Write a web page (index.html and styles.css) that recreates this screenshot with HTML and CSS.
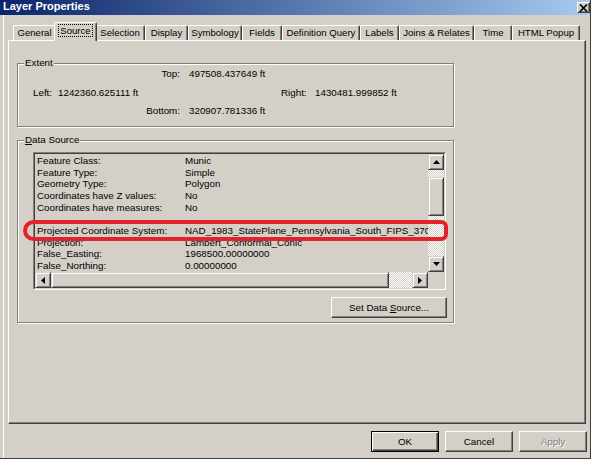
FILE: index.html
```html
<!DOCTYPE html>
<html>
<head>
<meta charset="utf-8">
<link rel="stylesheet" href="styles.css">
</head>
<body>
<div class="window">
  <div class="titlebar">
    <span class="title">Layer Properties</span>
    <span class="close"><svg width="9" height="8" viewBox="0 0 9 8"><path d="M1 0.5 L8 7.5 M8 0.5 L1 7.5" stroke="#000" stroke-width="1.6" fill="none"/></svg></span>
  </div>
  <div class="client">
    <div class="tabs">
      <div class="tab w-general">General</div>
      <div class="tab sel w-source"><span class="focus">Source</span></div>
      <div class="tab w-selection">Selection</div>
      <div class="tab w-display">Display</div>
      <div class="tab w-symbology">Symbology</div>
      <div class="tab w-fields">Fields</div>
      <div class="tab w-defq">Definition Query</div>
      <div class="tab w-labels">Labels</div>
      <div class="tab w-joins">Joins &amp; Relates</div>
      <div class="tab w-time">Time</div>
      <div class="tab w-html">HTML Popup</div>
    </div>
    <div class="panel">
      <div class="group extent">
        <div class="gtitle">Extent</div>
        <div class="erow r1"><span class="ecell-r">Top:</span><span class="evalue">497508.437649 ft</span></div>
        <div class="erow r2"><span class="ecell-left"><span class="lleft">Left:</span>1242360.625111 ft</span><span class="lright">Right:</span><span>1430481.999852 ft</span></div>
        <div class="erow r3"><span class="ecell-r">Bottom:</span><span class="evalue">320907.781336 ft</span></div>
      </div>
      <div class="group ds">
        <div class="gtitle"><u>D</u>ata Source</div>
        <div class="list">
          <div class="list-inner">
            <div class="rows">
              <div class="row"><span class="k">Feature Class:</span><span class="v">Munic</span></div>
              <div class="row"><span class="k">Feature Type:</span><span class="v">Simple</span></div>
              <div class="row"><span class="k">Geometry Type:</span><span class="v">Polygon</span></div>
              <div class="row"><span class="k">Coordinates have Z values:</span><span class="v">No</span></div>
              <div class="row"><span class="k">Coordinates have measures:</span><span class="v">No</span></div>
              <div class="row"><span class="k">&nbsp;</span><span class="v"></span></div>
              <div class="row"><span class="k">Projected Coordinate System:</span><span class="v">NAD_1983_StatePlane_Pennsylvania_South_FIPS_3702</span></div>
              <div class="row"><span class="k">Projection:</span><span class="v">Lambert_Conformal_Conic</span></div>
              <div class="row"><span class="k">False_Easting:</span><span class="v">1968500.00000000</span></div>
              <div class="row"><span class="k">False_Northing:</span><span class="v">0.00000000</span></div>
            </div>
            <div class="vsb">
              <div class="sbtn"><svg width="7" height="4" viewBox="0 0 7 4"><polygon points="3.5,0 7,4 0,4" fill="#000"/></svg></div>
              <div class="track vgap"></div>
              <div class="thumb vthumb"></div>
              <div class="track vfill"></div>
              <div class="sbtn"><svg width="7" height="4" viewBox="0 0 7 4"><polygon points="0,0 7,0 3.5,4" fill="#000"/></svg></div>
            </div>
            <div class="hsb">
              <div class="sbtn"><svg width="4" height="7" viewBox="0 0 4 7"><polygon points="4,0 4,7 0,3.5" fill="#000"/></svg></div>
              <div class="thumb hthumb"></div>
              <div class="track hfill"></div>
              <div class="sbtn"><svg width="4" height="7" viewBox="0 0 4 7"><polygon points="0,0 4,3.5 0,7" fill="#000"/></svg></div>
            </div>
            <div class="corner"></div>
          </div>
        </div>
        <div class="btn setds"><span>Set Data <u>S</u>ource...</span></div>
        <div class="highlight"></div>
      </div>
    </div>
    <div class="buttons">
      <div class="btn dlg default"><span>OK</span></div>
      <div class="btn dlg"><span>Cancel</span></div>
      <div class="btn dlg disabled"><span>Apply</span></div>
    </div>
  </div>
</div>
</body>
</html>
```

FILE: styles.css
```css
body {
  margin: 0;
  background: #fff;
  font-family: "Liberation Sans", Arial, sans-serif;
  font-size: 9.8px;
  color: #000;
}

.window {
  width: 591px;
  height: 459px;
  box-sizing: border-box;
  background: #d4d0c8;
  border-right: 1px solid #404040;
  border-bottom: 1px solid #404040;
  display: flex;
  flex-direction: column;
}

.titlebar {
  height: 15px;
  flex: none;
  background: linear-gradient(to right, #0a246a, #a6caf0);
  display: flex;
  align-items: flex-start;
  justify-content: space-between;
  padding-left: 3px;
}

.title {
  color: #fff;
  font-weight: bold;
  font-size: 11px;
  line-height: 13px;
}

.close {
  width: 13px;
  height: 11px;
  margin-top: 2px;
  box-sizing: border-box;
  background: #d4d0c8;
  border: 1px solid;
  border-color: #fff #404040 #404040 #fff;
  box-shadow: inset -1px -1px #808080;
  display: flex;
  align-items: center;
  justify-content: center;
}

.client {
  flex: 1;
  margin-left: 3px;
  border-left: 1px solid #fff;
  padding: 7px 0 0 4px;
  display: flex;
  flex-direction: column;
}

.tabs {
  height: 18px;
  display: flex;
  align-items: flex-end;
  padding-left: 5px;
}

.tab {
  height: 15px;
  box-sizing: border-box;
  border-top: 1px solid #fff;
  border-left: 1px solid #fff;
  border-right: 1px solid #404040;
  box-shadow: inset -1px 0 #808080;
  border-radius: 2px 2px 0 0;
  text-align: center;
  line-height: 13px;
  font-size: 9.6px;
  white-space: nowrap;
  background: #d4d0c8;
}

.tab.sel {
  height: 19px;
  margin: 0 -2px -1px;
  position: relative;
  z-index: 1;
  padding-top: 1px;
}

.focus {
  display: inline-block;
  border: 1px dotted #000;
  line-height: 11px;
  padding: 0 1px;
}

.w-general { width: 43px; }
.w-source { width: 43px; }
.w-selection { width: 50px; }
.w-display { width: 43px; }
.w-symbology { width: 54px; }
.w-fields { width: 40px; }
.w-defq { width: 78px; }
.w-labels { width: 39px; }
.w-joins { width: 75px; }
.w-time { width: 38px; }
.w-html { width: 68px; }

.panel {
  width: 578px;
  height: 384px;
  box-sizing: border-box;
  border-top: 1px solid #fff;
  border-left: 1px solid #fff;
  border-right: 1px solid #404040;
  border-bottom: 1px solid #404040;
  box-shadow: inset -1px -1px #808080;
  padding: 22px 0 0 8px;
}

.group {
  width: 437px;
  box-sizing: border-box;
  border: 1px solid #808080;
  box-shadow: inset 1px 1px #fff, 1px 1px #fff;
}

.gtitle {
  margin: -7px 0 0 6px;
  padding: 0 1px;
  width: fit-content;
  background: #d4d0c8;
  line-height: 12px;
}

.extent {
  height: 64px;
}

.erow {
  display: flex;
  line-height: 12px;
  padding-left: 15px;
  white-space: nowrap;
}

.r1 { margin-top: -1px; }
.r2 { margin-top: 7px; }
.r3 { margin-top: 6px; }

.ecell-r {
  width: 147px;
  text-align: right;
  margin-right: 9px;
}

.ecell-left {
  width: 248px;
}

.lleft {
  display: inline-block;
  width: 25px;
}

.lright {
  width: 34px;
}

.ds {
  margin-top: 13px;
  height: 183px;
  display: flex;
  flex-direction: column;
  position: relative;
}

.list {
  margin: 6px 0 0 15px;
  width: 413px;
  height: 138px;
  box-sizing: border-box;
  border: 1px solid;
  border-color: #808080 #fff #fff #808080;
}

.list-inner {
  height: 100%;
  box-sizing: border-box;
  border: 1px solid;
  border-color: #404040 #d4d0c8 #d4d0c8 #404040;
  display: grid;
  grid-template-columns: 1fr 16px;
  grid-template-rows: 1fr 16px;
}

.rows {
  overflow: hidden;
  padding: 1px 0 0 2px;
}

.row {
  display: flex;
  line-height: 11.67px;
  white-space: nowrap;
}

.k {
  width: 148px;
  flex: none;
}

.vsb {
  display: flex;
  flex-direction: column;
}

.hsb {
  display: flex;
}

.sbtn {
  width: 16px;
  height: 16px;
  flex: none;
  box-sizing: border-box;
  border: 1px solid;
  border-color: #d4d0c8 #404040 #404040 #d4d0c8;
  box-shadow: inset 1px 1px #fff, inset -1px -1px #808080;
  display: flex;
  align-items: center;
  justify-content: center;
}

.track {
  background: repeating-conic-gradient(#fff 0 25%, #d4d0c8 0 50%) 0 0 / 2px 2px;
}

.thumb {
  box-sizing: border-box;
  border: 1px solid;
  border-color: #d4d0c8 #404040 #404040 #d4d0c8;
  box-shadow: inset 1px 1px #fff, inset -1px -1px #808080;
  background: #d4d0c8;
}

.vgap { height: 7px; flex: none; }
.vthumb { height: 39px; flex: none; }
.vfill { flex: 1; }
.hthumb { width: 338px; flex: none; }
.hfill { flex: 1; }

.corner {
  background: #d4d0c8;
}

.btn {
  box-sizing: border-box;
  height: 21px;
  border: 1px solid;
  border-color: #fff #404040 #404040 #fff;
  box-shadow: inset -1px -1px #808080;
  display: flex;
  align-items: center;
  justify-content: center;
  white-space: nowrap;
}

.setds {
  width: 116px;
  margin: 7px 6px 0 auto;
}

.highlight {
  position: absolute;
  left: 5px;
  top: 79px;
  width: 425px;
  height: 21px;
  box-sizing: border-box;
  border: 4px solid #e3222c;
  border-radius: 11px 7px 7px 11px;
}

.buttons {
  margin-top: 7px;
  margin-right: 3px;
  display: flex;
  justify-content: flex-end;
  gap: 6px;
}

.dlg {
  width: 68px;
}

.default {
  border: 1px solid #000;
  box-shadow: inset 1px 1px #fff, inset -1px -1px #404040, inset -2px -2px #808080;
}

.disabled {
  color: #808080;
  text-shadow: 1px 1px #fff;
}
```
